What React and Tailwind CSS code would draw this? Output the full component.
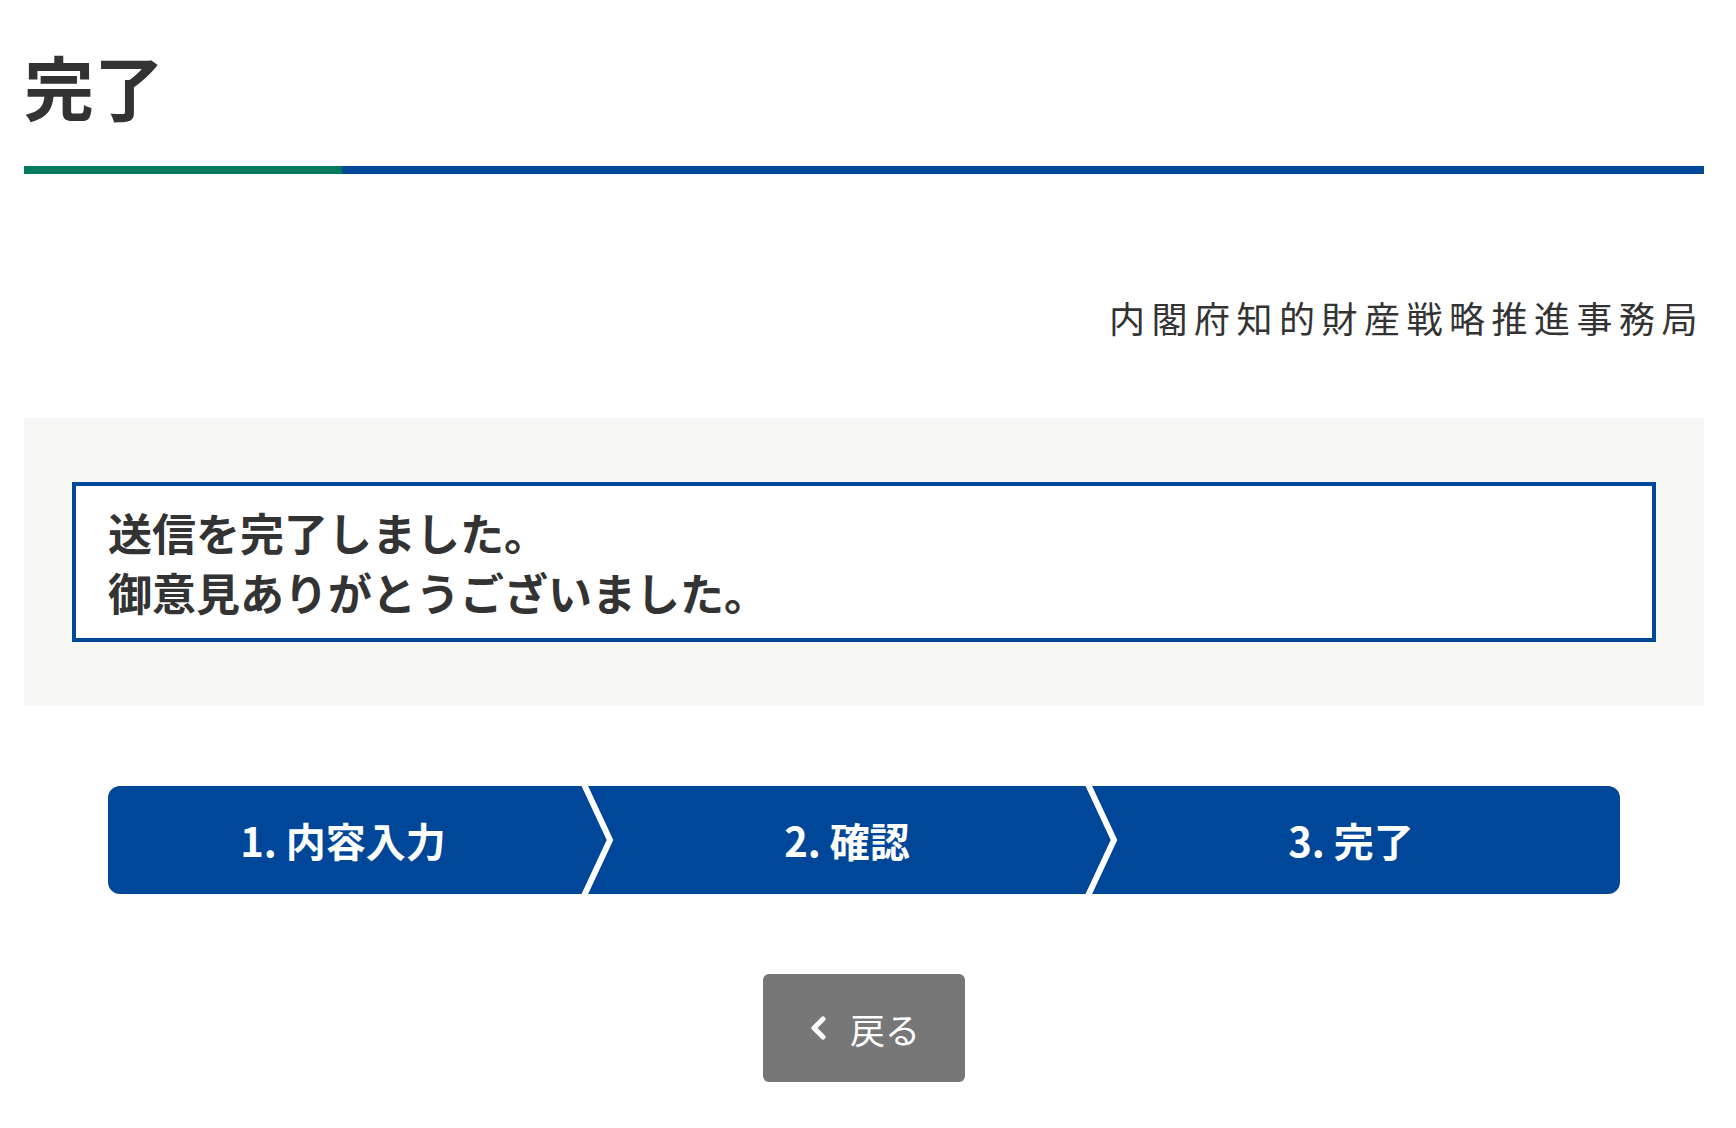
export default function App() {
  const steps = ['1. 内容入力', '2. 確認', '3. 完了'];

  return (
    <div className="min-h-screen bg-white text-[#333] font-['Noto_Sans_CJK_JP','Noto_Sans',sans-serif] pl-[24px] pr-[32px] pt-[51px] pb-[40px]">
      {/* Title */}
      <h1 className="text-[70px] leading-none font-bold">完了</h1>
      <div className="flex h-[8px] mt-[45px]">
        <div className="w-[318px] bg-[#007b5f]" />
        <div className="flex-1 bg-[#00479a]" />
      </div>

      {/* Org name */}
      <p className="mt-[125px] text-right text-[36px] leading-none tracking-[6.5px]">内閣府知的財産戦略推進事務局</p>

      {/* Message */}
      <div className="mt-[83px] bg-[#f7f7f5] px-[48px] py-[64px]">
        <div className="bg-white border-[4px] border-[#00479a] px-[32px] py-[16px]">
          <p className="text-[44px] leading-[60px] font-bold">
            送信を完了しました。
            <br />
            御意見ありがとうございました。
          </p>
        </div>
      </div>

      {/* Steps */}
      <div className="mt-[80px] w-[90%] mx-auto h-[108px] flex bg-[#00479a] rounded-[12px] overflow-hidden">
        {steps.map((label, i) => (
          <div key={label} className="relative flex-1 flex items-center justify-center pr-[34px]">
            <span className="text-white text-[40px] font-bold leading-none">{label}</span>
            {i < steps.length - 1 && (
              <svg className="absolute top-0 right-[-6px] h-[108px] w-[40px]" viewBox="0 0 40 108">
                <polyline points="4,-6 32,54 4,114" fill="none" stroke="#fff" strokeWidth="6" />
              </svg>
            )}
          </div>
        ))}
      </div>

      {/* Back button */}
      <div className="mt-[80px] flex justify-center">
        <button className="w-[202px] h-[108px] bg-[#777] rounded-[6px] flex items-center justify-center gap-[22px] text-white">
          <svg width="20" height="30" viewBox="0 0 20 30">
            <polyline points="15,6 6,15 15,24" fill="none" stroke="#fff" strokeWidth="5" strokeLinecap="round" strokeLinejoin="round" />
          </svg>
          <span className="text-[35px] leading-none">戻る</span>
        </button>
      </div>
    </div>
  );
}
